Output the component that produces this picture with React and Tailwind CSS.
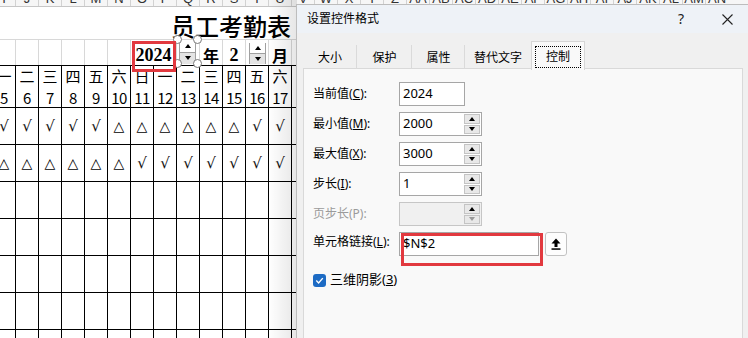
import React from 'react';

const LETTERS = ['I','J','K','L','M','N','O','P','Q','R','S','T','U','V','W','X','Y','Z','AA','AB','AC','AD','AE','AF','AG','AH','AI','AJ','AK','AL','AM','AN'];
const WEEK = ['一','二','三','四','五','六','日','一','二','三','四','五','六','日'];
const DAYS = [5,6,7,8,9,10,11,12,13,14,15,16,17,18];
const C = '√';
const T = '△';
const ROW_A = [C,C,C,C,C,T,T,T,T,T,T,C,C,C];
const ROW_B = [T,T,T,T,T,T,C,C,C,C,C,C,C,C];

function Cell({ children, className = '' }) {
  return (
    <div className={`w-[23px] shrink-0 border-l border-black flex items-center justify-center ${className}`}>
      {children}
    </div>
  );
}

function Mark({ v }) {
  if (v === C) return <span className="text-[15px] text-[#111] font-['DejaVu_Sans',sans-serif]">{v}</span>;
  if (v === T) return <span className="text-[14px] text-black font-['DejaVu_Sans',sans-serif]">{v}</span>;
  return null;
}

function Handle({ className }) {
  return <div className={`absolute w-[9px] h-[9px] rounded-full bg-white border-[1.5px] border-[#7a7a7a] ${className}`} />;
}

function Up({ gray }) {
  return <div className={`w-0 h-0 border-x-[3px] border-x-transparent border-b-[4px] ${gray ? 'border-b-[#9a9a9a]' : 'border-b-black'}`} />;
}
function Down({ gray }) {
  return <div className={`w-0 h-0 border-x-[3px] border-x-transparent border-t-[4px] ${gray ? 'border-t-[#9a9a9a]' : 'border-t-black'}`} />;
}

function Field({ label, value, spin, disabled, width }) {
  return (
    <div className="flex items-center h-[24px] mb-[6px]">
      <div className={`w-[86px] shrink-0 ${disabled ? 'text-[#9b9b9b]' : 'text-black'}`}>{label}</div>
      <div className={`h-[24px] flex border ${disabled ? 'bg-[#f0f0f0] border-[#c6c6c6]' : 'bg-white border-[#a6a6a6]'} ${width}`}>
        <div className="flex-1 flex items-center pl-[3px] text-[13px] font-['Noto_Sans',sans-serif]">{value}</div>
        {spin && (
          <div className="w-[17px] flex flex-col gap-[1px] py-[1px] pr-[1px]">
            <div className="flex-1 flex items-center justify-center bg-[#e8e8e8] border border-[#c4c4c4]"><Up /></div>
            <div className="flex-1 flex items-center justify-center bg-[#e8e8e8] border border-[#c4c4c4]"><Down gray={disabled} /></div>
          </div>
        )}
      </div>
    </div>
  );
}

export default function App() {
  return (
    <div className="relative w-[748px] h-[338px] overflow-hidden bg-white">
      {/* Spreadsheet */}
      <div className="font-['Noto_Sans_CJK_SC',sans-serif] text-black">
        <div className="h-[7px] overflow-hidden bg-[#f6f6f6] border-b border-[#c6c6c6]">
          <div className="flex ml-[-8px] -mt-[9px]">
            {LETTERS.map((l) => (
              <div key={l} className="w-[23px] h-[16px] shrink-0 border-l border-[#d2d2d2] text-[13px] leading-[16px] text-center text-[#333] font-['Liberation_Sans',sans-serif]">{l}</div>
            ))}
          </div>
        </div>
        <div className="h-[33px] border-b border-[#d8d8d8] pl-[171px] pt-[4px] text-[24px] leading-[30px] font-medium">员工考勤表</div>
        <div className="h-[25px] flex ml-[-8px] font-bold text-[16px] leading-[16px]">
          {[0,1,2,3,4,5].map((i) => (
            <div key={i} className="w-[23px] shrink-0 border-l border-[#d8d8d8]" />
          ))}
          <div className="w-[46px] shrink-0 border-l border-[#d8d8d8] flex items-center justify-center pt-[5px] font-['Liberation_Serif',serif] text-[18px]">2024</div>
          <div className="w-[23px] shrink-0 border-l border-[#d8d8d8]" />
          <div className="w-[23px] shrink-0 border-l border-[#d8d8d8] flex items-center justify-center pt-[5px]">年</div>
          <div className="w-[23px] shrink-0 border-l border-[#d8d8d8] flex items-center justify-center pt-[5px] font-['Liberation_Serif',serif] text-[18px]">2</div>
          <div className="w-[23px] shrink-0 border-l border-[#d8d8d8]" />
          <div className="w-[23px] shrink-0 border-l border-[#d8d8d8] flex items-center justify-center pt-[5px]">月</div>
          <div className="w-[23px] shrink-0 border-l border-[#d8d8d8]" />
        </div>
        <div className="border-t border-black">
          <div className="h-[21px] flex ml-[-8px] text-[15px]">
            {WEEK.map((w, i) => <Cell key={i}>{w}</Cell>)}
          </div>
          <div className="h-[20px] flex ml-[-8px] text-[15px] font-['Noto_Sans_CJK_SC',sans-serif] tracking-[-0.5px]">
            {DAYS.map((d) => <Cell key={d} className="pt-[2px]">{d}</Cell>)}
          </div>
          {[ROW_A, ROW_B, null, null, null, null, null].map((row, r) => (
            <div key={r} className="h-[37px] flex ml-[-8px] border-t border-black">
              {WEEK.map((_, i) => (
                <Cell key={i}>{row ? <Mark v={row[i]} /> : null}</Cell>
              ))}
            </div>
          ))}
        </div>
      </div>

      {/* Selected spinner (year) */}
      <div className="absolute left-[179px] top-[40px] w-[17px] h-[24px] flex flex-col border-x border-[#a0a0a0]">
        <div className="flex-1 flex items-center justify-center bg-white"><Up /></div>
        <div className="flex-1 flex items-center justify-center bg-[#e4e4e4] border-t border-[#a0a0a0]"><Down /></div>
      </div>
      <Handle className="left-[173px] top-[35px]" />
      <Handle className="left-[193px] top-[35px]" />
      <Handle className="left-[173px] top-[59px]" />
      <Handle className="left-[193px] top-[59px]" />

      {/* Month spinner */}
      <div className="absolute left-[249px] top-[43px] w-[17px] h-[21px] flex flex-col border-x border-[#a0a0a0]">
        <div className="flex-1 flex items-center justify-center bg-white"><Up /></div>
        <div className="flex-1 flex items-center justify-center bg-[#e4e4e4] border-t border-[#a0a0a0]"><Down /></div>
      </div>

      {/* Red annotation in sheet */}
      <div className="absolute left-[132px] top-[41px] w-[44px] h-[31px] border-[3px] border-[#e2393f]" />

      {/* Dialog shadow */}
      <div className="absolute left-[268px] top-0 w-[29px] h-full bg-linear-to-r from-transparent to-black/10" />

      {/* Dialog */}
      <div className="absolute left-[296px] top-[4px] w-[470px] h-[345px] bg-[#f0f0f0] border border-[#bdbdbd] font-['Noto_Sans','Noto_Sans_CJK_SC',sans-serif] text-[12px] text-black">
        <div className="relative h-[28px] bg-[#eef2f7] flex items-center pl-[10px]">
          <span>设置控件格式</span>
          <span className="absolute left-[381px] top-[5px] text-[14px] leading-[18px] text-[#222]">?</span>
          <svg className="absolute left-[425px] top-[9px]" width="11" height="11" viewBox="0 0 11 11">
            <path d="M0.5 0.5 L10.5 10.5 M10.5 0.5 L0.5 10.5" stroke="#222" strokeWidth="1.1" fill="none" />
          </svg>
        </div>
        <div className="pl-[6px] pt-[8px]">
          <div className="flex h-[28px] items-stretch">
            {[['大小', 'w-[54px]'], ['保护', 'w-[55px]'], ['属性', 'w-[53px]']].map(([t, w]) => (
              <div key={t} className={`${w} flex justify-center pt-[9px] leading-[16px] relative`}>
                {t}
                <div className="absolute right-0 top-[4px] bottom-0 w-px bg-[#dadada]" />
              </div>
            ))}
            <div className="w-[66px] flex justify-center pt-[9px] leading-[16px]">替代文字</div>
            <div className="relative z-10 w-[54px] h-[29px] bg-[#f9f9f9] border-x border-t border-[#d6d6d6] px-[3px] pt-[4px] pb-[2px]">
              <div className="h-full border border-dotted border-black flex items-center justify-center">控制</div>
            </div>
          </div>
          <div className="w-[440px] h-[280px] bg-[#f9f9f9] border border-[#d9d9d9] -mt-px pl-[9px] pt-[13px]">
            <Field label={<>当前值(<u>C</u>):</>} value="2024" width="w-[66px]" />
            <Field label={<>最小值(<u>M</u>):</>} value="2000" spin width="w-[83px]" />
            <Field label={<>最大值(<u>X</u>):</>} value="3000" spin width="w-[83px]" />
            <Field label={<>步长(<u>I</u>):</>} value="1" spin width="w-[83px]" />
            <Field label={<>页步长(P):</>} value="" spin disabled width="w-[83px]" />
            <div className="flex items-center h-[24px]">
              <div className="w-[86px] shrink-0 -mt-[5px]">单元格链接(<u>L</u>):</div>
              <div className="relative w-[140px] h-[24px] bg-white border border-[#a6a6a6] flex items-center pl-[3px] text-[13px]">
                $N$2
                <div className="absolute left-[1px] top-0 w-[142px] h-[33px] border-[3px] border-[#e2393f]" />
              </div>
              <div className="ml-[6px] w-[22px] h-[24px] bg-[#fdfdfd] border border-[#c2c2c2] rounded-[3px] flex items-center justify-center">
                <svg width="10" height="12" viewBox="0 0 10 12">
                  <path d="M5 0.5 L9.5 5.5 L6.5 5.5 L6.5 9 L3.5 9 L3.5 5.5 L0.5 5.5 Z" fill="#000" />
                  <rect x="0.5" y="10.3" width="9" height="1.5" fill="#000" />
                </svg>
              </div>
            </div>
            <div className="flex items-center mt-[17px] h-[14px]">
              <div className="w-[13px] h-[13px] rounded-[3px] bg-[#1d6bc4] flex items-center justify-center">
                <svg width="9" height="9" viewBox="0 0 9 9">
                  <path d="M1.3 4.6 L3.6 6.9 L7.8 2.1" stroke="#fff" strokeWidth="1.4" fill="none" />
                </svg>
              </div>
              <span className="ml-[4px] text-[13px]">三维阴影(<u>3</u>)</span>
            </div>
          </div>
        </div>
      </div>
    </div>
  );
}
